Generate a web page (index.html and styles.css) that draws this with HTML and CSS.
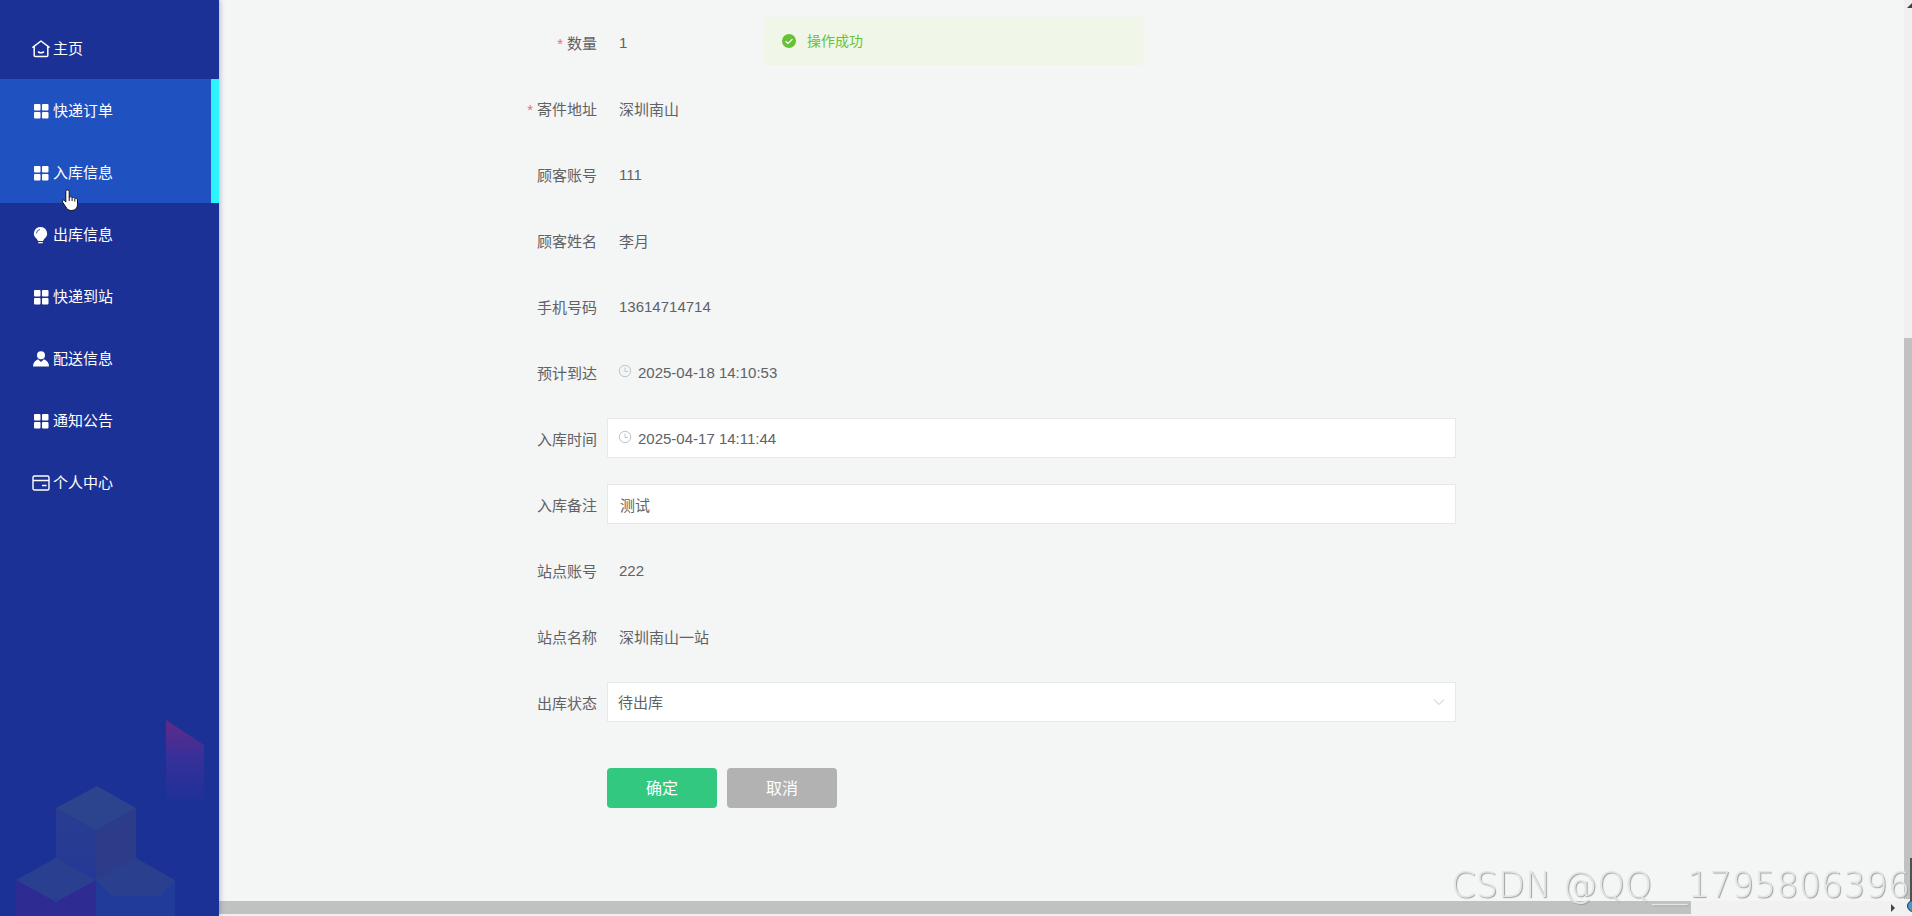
FILE: index.html
```html
<!DOCTYPE html>
<html lang="zh-CN">
<head>
    <meta charset="UTF-8">
    <title>入库信息</title>
    <link rel="stylesheet" href="styles.css">
</head>
<body>
    <!-- shared icons -->
    <svg class="defs" width="0" height="0">
        <symbol id="icon-menu" viewBox="0 0 18 18">
            <rect x="2" y="2" width="6.500" height="6.500" rx="1" fill="currentColor"/>
            <rect x="10" y="2" width="6.500" height="6.500" rx="1" fill="currentColor"/>
            <rect x="2" y="10" width="6.500" height="6.500" rx="1" fill="currentColor"/>
            <rect x="10" y="10" width="6.500" height="6.500" rx="1" fill="currentColor"/>
        </symbol>
        <symbol id="icon-clock" viewBox="0 0 14 14">
            <circle cx="7" cy="7" r="5.7" fill="none" stroke="currentColor"/>
            <path d="M7 3.5v4h3" fill="none" stroke="currentColor"/>
        </symbol>
    </svg>

    <div class="layout">
        <aside class="sidebar">
            <svg class="sidebar-bg" width="219" height="200" viewBox="0 0 219 200">
                <defs>
                    <linearGradient id="pink" x1="0" y1="0" x2="0" y2="1">
                        <stop offset="0" stop-color="#612a88"/>
                        <stop offset="0.4" stop-color="#36309a"/>
                        <stop offset="0.9" stop-color="#1b3196"/>
                    </linearGradient>
                    <linearGradient id="side" x1="0" y1="0" x2="0" y2="1">
                        <stop offset="0" stop-color="#2a3d90"/>
                        <stop offset="1" stop-color="#24369a"/>
                    </linearGradient>
                </defs>
                <path d="M166 4l38 25v70h-38z" fill="url(#pink)"/>
                <path d="M56 92l40 23v72l-40-20z" fill="url(#side)"/>
                <path d="M136 92l-40 23v72l40-20z" fill="#2c3c88"/>
                <path d="M97 70l39 22-40 23-40-23z" fill="#2c438e"/>
                <path d="M16 164l40 22 40-22v36H16z" fill="#2e2b93"/>
                <path d="M96 164h79v36H96z" fill="#213b9b"/>
                <path d="M56 142l40 22-40 22-40-22z" fill="#2a3f90"/>
                <path d="M136 142l39 22-14 16h-49l-16-16z" fill="#2a3f8d"/>
            </svg>
            <nav class="menu">
                <a class="menu-item" href="#">
                    <svg class="icon" viewBox="0 0 18 18" fill="none" stroke="currentColor" stroke-width="1.5" stroke-linejoin="round" stroke-linecap="round"><path d="M1 7.2L9 1l8 6.2M2.200 6.500V15.500a1 1 0 0 0 1 1h11.600a1 1 0 0 0 1-1V6.500M6.500 12q2.500 1.600 5 0"/></svg>
                    <span>主页</span>
                </a>
                <a class="menu-item active" href="#">
                    <svg class="icon"><use href="#icon-menu"/></svg>
                    <span>快递订单</span>
                </a>
                <a class="menu-item active" href="#">
                    <svg class="icon"><use href="#icon-menu"/></svg>
                    <span>入库信息</span>
                </a>
                <a class="menu-item" href="#">
                    <svg class="icon" viewBox="0 0 18 18"><path d="M8.500 1a6.500 6.500 0 0 1 3.800 11.800L11 15H6l-1.300-2.200A6.500 6.500 0 0 1 8.500 1zM6.300 16h4.400v1.300H6.300z" fill="currentColor"/><path d="M4.500 7.500a4 4 0 0 1 3.500-4" fill="none" stroke="#1b3196" stroke-width="0.8"/></svg>
                    <span>出库信息</span>
                </a>
                <a class="menu-item" href="#">
                    <svg class="icon"><use href="#icon-menu"/></svg>
                    <span>快递到站</span>
                </a>
                <a class="menu-item" href="#">
                    <svg class="icon" viewBox="0 0 18 18" fill="currentColor"><circle cx="9" cy="5.300" r="4"/><path d="M1 16.500c0-3.500 2-6 5-7.200L9 12l3-2.700c3 1.200 5 3.700 5 7.200z"/></svg>
                    <span>配送信息</span>
                </a>
                <a class="menu-item" href="#">
                    <svg class="icon"><use href="#icon-menu"/></svg>
                    <span>通知公告</span>
                </a>
                <a class="menu-item" href="#">
                    <svg class="icon" viewBox="0 0 18 18" fill="none" stroke="currentColor" stroke-width="1.4"><rect x="1" y="2" width="16" height="14" rx="1.500"/><path d="M1 6.500h16M10 11.500h4.500"/></svg>
                    <span>个人中心</span>
                </a>
            </nav>
            <svg class="pointer" width="19" height="24" viewBox="0 0 19 24"><path d="M6.500 2c1.100 0 1.700.7 1.700 1.700v5.600c.5-.7 2.500-.7 2.900.4.700-.6 2.400-.4 2.700.8.900-.5 2.700-.1 2.700 1.500v4.500c0 3.500-2 6-5.800 6-3.500 0-4.700-1.400-6-3.700L1.500 14c-.7-1.400 1-2.500 2-1.500l1.300 1.600V3.700C4.800 2.700 5.400 2 6.500 2z" fill="#fff" stroke="#111" stroke-width="1"/><path d="M8.200 9v4M11.100 10v3M13.800 11v2.500" stroke="#111"/></svg>
        </aside>

        <div class="main">
            <form class="form">
                <div class="row">
                    <label class="required" for="count">数量</label>
                    <input type="text" id="count" value="1" readonly>
                </div>
                <div class="row">
                    <label class="required" for="address">寄件地址</label>
                    <input type="text" id="address" value="深圳南山" readonly>
                </div>
                <div class="row">
                    <label for="account">顾客账号</label>
                    <input type="text" id="account" value="111" readonly>
                </div>
                <div class="row">
                    <label for="name">顾客姓名</label>
                    <input type="text" id="name" value="李月" readonly>
                </div>
                <div class="row">
                    <label for="phone">手机号码</label>
                    <input type="text" id="phone" value="13614714714" readonly>
                </div>
                <div class="row">
                    <label for="arrive">预计到达</label>
                    <div class="field date">
                        <svg class="prefix"><use href="#icon-clock"/></svg>
                        <input type="text" id="arrive" value="2025-04-18 14:10:53" readonly>
                    </div>
                </div>
                <div class="row">
                    <label for="intime">入库时间</label>
                    <div class="field date">
                        <svg class="prefix"><use href="#icon-clock"/></svg>
                        <input type="text" id="intime" value="2025-04-17 14:11:44">
                    </div>
                </div>
                <div class="row">
                    <label for="remark">入库备注</label>
                    <input type="text" id="remark" value="测试">
                </div>
                <div class="row">
                    <label for="station">站点账号</label>
                    <input type="text" id="station" value="222" readonly>
                </div>
                <div class="row">
                    <label for="stationName">站点名称</label>
                    <input type="text" id="stationName" value="深圳南山一站" readonly>
                </div>
                <div class="row">
                    <label for="status">出库状态</label>
                    <div class="field">
                        <select id="status">
                            <option>待出库</option>
                            <option>已出库</option>
                        </select>
                        <svg class="arrow" viewBox="0 0 14 14"><path d="M2 4.500l5 5 5-5" fill="none" stroke="currentColor"/></svg>
                    </div>
                </div>
                <div class="buttons">
                    <button type="button" class="btn-ok">确定</button>
                    <button type="button" class="btn-cancel">取消</button>
                </div>
            </form>
            <div class="scroll-x">
                <div class="thumb-x"></div>
                <svg width="6" height="8" viewBox="0 0 6 8"><path d="M1 0l4 4-4 4z" fill="#444"/></svg>
            </div>
        </div>

        <div class="scroll-y">
            <svg width="8" height="8" viewBox="0 0 8 8"><path d="M3 8l5-5v5z" fill="#444"/></svg>
            <div class="thumb-y"></div>
        </div>
    </div>

    <div class="message">
        <svg width="14" height="14" viewBox="0 0 14 14"><circle cx="7" cy="7" r="7" fill="#67c23a"/><path d="M3.600 7.200l2.400 2.300 4.400-4.400" fill="none" stroke="#fff" stroke-width="1.200"/></svg>
        <p>操作成功</p>
    </div>

    <div class="edge-widget"></div>
    <div class="edge-dot"></div>
    <div class="watermark">CSDN @QQ__1795806396</div>
</body>
</html>
```
FILE: styles.css
```css
* {
    box-sizing: border-box;
}

body {
    margin: 0;
    font-family: "Liberation Sans", "Noto Sans CJK SC", sans-serif;
    font-size: 15px;
    color: #606266;
    background-color: #f4f5f5;
    overflow: hidden;
}

.defs {
    position: absolute;
}

.layout {
    display: flex;
    height: 100vh;
}

/* sidebar */
.sidebar {
    position: relative;
    flex: 0 0 219px;
    padding-top: 17px;
    background-color: #1b3196;
    box-shadow: 1px 0 5px rgba(60, 70, 130, 0.35);
}

.sidebar-bg {
    position: absolute;
    left: 0;
    bottom: 0;
}

.menu {
    position: relative;
}

.menu-item {
    display: flex;
    align-items: center;
    gap: 3px;
    height: 62px;
    padding-left: 32px;
    color: #fff;
    text-decoration: none;
}

.menu-item.active {
    background-color: #1f51c1;
    border-right: 8px solid #2df3fd;
}

.menu-item span {
    padding-bottom: 1px;
}

.icon {
    width: 18px;
    height: 18px;
    margin-top: 2px;
}

.pointer {
    position: absolute;
    left: 61px;
    top: 188px;
}

/* form */
.main {
    flex: 1;
    min-width: 0;
    display: flex;
    flex-direction: column;
}

.form {
    flex: 1;
    padding: 22px 448px 0 228px;
}

.row {
    display: flex;
    align-items: center;
    height: 40px;
    margin-bottom: 26px;
}

label {
    width: 160px;
    padding-right: 10px;
    text-align: right;
}

.required::before {
    content: "*";
    margin-right: 4px;
    color: #f56c6c;
}

.row > input,
.field {
    flex: 1;
    min-width: 0;
}

.field {
    position: relative;
}

input,
select {
    display: block;
    width: 100%;
    height: 40px;
    padding: 0 12px;
    border: 1px solid #e6e8e9;
    border-radius: 0;
    font: inherit;
    color: #606266;
    background-color: #fff;
    outline: none;
}

input[readonly] {
    padding-left: 11px;
    border-color: transparent;
    background-color: transparent;
}

select {
    appearance: none;
    padding: 0 10px;
}

.date input,
.date input[readonly] {
    padding-left: 30px;
}

.prefix,
.arrow {
    position: absolute;
    top: 12px;
    width: 14px;
    height: 14px;
    color: #c0c4cc;
}

.prefix {
    left: 11px;
}

.arrow {
    top: 13px;
    right: 10px;
}

.buttons {
    display: flex;
    gap: 10px;
    padding: 20px 0 0 160px;
}

button {
    width: 110px;
    height: 40px;
    padding: 0 0 2px;
    border: none;
    border-radius: 4px;
    font: inherit;
    font-size: 16px;
    color: #fff;
    cursor: pointer;
}

.btn-ok {
    background-color: #33c87f;
}

.btn-cancel {
    background-color: #b2b2b2;
}

/* scrollbars */
.scroll-x {
    display: flex;
    align-items: flex-start;
    justify-content: space-between;
    height: 15px;
    padding-right: 8px;
    background-color: #f1f1f1;
}

.scroll-x svg {
    margin-top: 3px;
}

.thumb-x {
    width: 87.8%;
    height: 13px;
    background-color: #c0c1c1;
}

.scroll-y {
    flex: 0 0 8px;
    display: flex;
    flex-direction: column;
    justify-content: space-between;
    padding-bottom: 17px;
    background-color: #f0f0f0;
}

.thumb-y {
    height: 62.4%;
    background-color: #c1c1c1;
}

/* success message */
.message {
    position: fixed;
    top: 17px;
    left: 50%;
    display: flex;
    align-items: center;
    gap: 11px;
    width: 380px;
    height: 48px;
    margin-left: -192px;
    padding: 0 17px;
    border: 1px solid #eef6e6;
    border-radius: 4px;
    background-color: #f0f7e8;
    color: #67c23a;
    font-size: 14px;
}

.message p {
    margin: 0;
    padding-bottom: 2px;
}

.edge-widget {
    position: fixed;
    right: 0;
    bottom: 14px;
    width: 2px;
    height: 44px;
    background-color: #4b5257;
}

.edge-dot {
    position: fixed;
    right: -7px;
    bottom: 4px;
    width: 12px;
    height: 12px;
    border: 1px solid #333;
    border-radius: 50%;
    background-color: #3d9bd0;
}

.watermark {
    position: fixed;
    right: 2px;
    bottom: 10px;
    font-family: "DejaVu Sans", sans-serif;
    font-size: 35px;
    font-weight: 200;
    line-height: 42px;
    color: #e4e5e5;
    text-shadow: 1px 1px 1px #a0a0a0;
}
```
